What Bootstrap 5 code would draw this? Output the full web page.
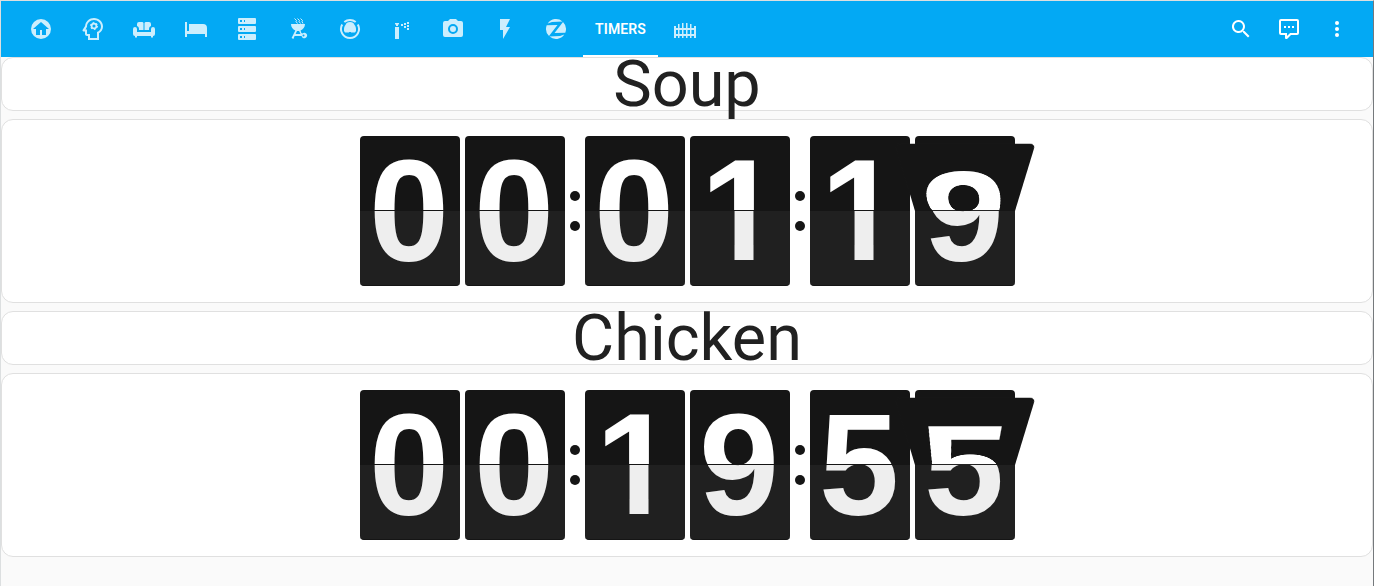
<!DOCTYPE html>
<html lang="en">
<head>
<meta charset="utf-8">
<meta name="viewport" content="width=device-width, initial-scale=1">
<title>Timers</title>
<link href="https://cdn.jsdelivr.net/npm/bootstrap@5.3.0/dist/css/bootstrap.min.css" rel="stylesheet">
<style>
body{font-family:Roboto,sans-serif;background:#fafafa;color:#212121;height:586px;overflow:hidden;border:solid #dcdfe0;border-width:1px 1px 0;border-right-color:#75797c}
.appbar{height:56px;background:#03a9f4;color:#fff;padding-left:14.2px;padding-right:12px}
.appbar svg{width:24px;height:24px;fill:currentColor;display:block}
.view-tab{width:51.54px;color:rgba(255,255,255,.8)}
.view-tab.current{width:75px;margin:0 1px;color:#fff;font-size:14px;font-weight:600;letter-spacing:.1px;border-bottom:2px solid #fff;padding-top:2px}
.tool{width:48px;height:48px;color:#fff}
.panel{background:#fff;border:1px solid #e0e0e0;border-radius:12px}
.heading{height:54px;font-size:64.8px;line-height:53px;font-weight:400}
.clock-panel{height:184px}
.clock{gap:5px}
.flip{width:100px;height:150px;position:relative;perspective:200px;font:bold 144px/150px "Liberation Sans",sans-serif;text-align:center}
.half{position:absolute;left:0;width:100px;height:75px;overflow:hidden}
.half span{display:block;width:99px;height:150px;line-height:151px}
.upper{top:0;background:#151515;color:#fff;border-radius:4px 4px 0 0}
.upper::after{content:"";position:absolute;left:0;right:0;bottom:0;height:1px;background:#151515}
.lower{top:75px;background:#202020;color:#eee;border-radius:0 0 4px 4px;border-bottom:1px solid #151515}
.lower span{margin-top:-75px}
.half .one{width:102px;line-height:149px}
.lower .one{clip-path:inset(0 38px 26px 45px)}
.leaf{transform-origin:50% 100%;transform:rotateX(-50.3deg)}
.colon{width:10px;gap:20px}
.colon i{width:10px;height:10px;border-radius:50%;background:#151515}
</style>
</head>
<body>
<header class="appbar d-flex align-items-stretch">
  <nav class="d-flex" id="tabs">
    <a class="view-tab d-flex align-items-center justify-content-center"><svg viewBox="0 0 24 24"><path fill-rule="evenodd" d="M12 2a10 10 0 1 1 0 20 10 10 0 0 1 0-20ZM12 5l-8 7h3v6h4v-5h2v5h4v-6h3Z"/></svg></a>
    <a class="view-tab d-flex align-items-center justify-content-center"><svg viewBox="-1 0 24 24"><path d="M13 1C8.400 1 4.600 4.500 4.100 9L1.700 12.800C1.200 13.500 1.700 14.400 2.500 14.400H4V17C4 18.100 4.900 19 6 19H7V23H18V16.300C20.400 14.900 22 12.200 22 9.500C22 4.800 18 1 13 1ZM16 15V21H9V17H6V12.500H4.500L6 9.700C6 6 9 3 13 3C17 3 20 6 20 9.700C20 12.100 18.400 14 16 15Z" fill-rule="evenodd"/><circle cx="13" cy="9" r="2.400" fill="none" stroke="currentColor" stroke-width="1.700"/><circle cx="13" cy="9" r="3.600" fill="none" stroke="currentColor" stroke-width="1" stroke-dasharray="1.800 1.970"/></svg></a>
    <a class="view-tab d-flex align-items-center justify-content-center"><svg viewBox="0 0 24 24"><path d="M7 5a2 2 0 0 0-2 2v2c1.200.4 2 1.600 2 3v1h4.500V6A1.500 1.500 0 0 0 10 5ZM14 5a1.500 1.500 0 0 0-1.500 1v7H17v-1c0-1.400.8-2.600 2-3V7a2 2 0 0 0-2-2ZM3 10a2 2 0 0 0-2 2v5a2 2 0 0 0 2 2v1.500h2V19h14v1.500h2V19a2 2 0 0 0 2-2v-5a2 2 0 0 0-4 0v3H5v-3a2 2 0 0 0-2-2Z"/></svg></a>
    <a class="view-tab d-flex align-items-center justify-content-center"><svg viewBox="0 0 24 24"><path d="M1 5h2v9h2V7h14a4 4 0 0 1 4 4v9h-2v-3H3v3H1Z"/></svg></a>
    <a class="view-tab d-flex align-items-center justify-content-center"><svg viewBox="0 0 24 24"><path fill-rule="evenodd" d="M4 1h16a1 1 0 0 1 1 1v4a1 1 0 0 1-1 1H4a1 1 0 0 1-1-1V2a1 1 0 0 1 1-1Zm0 8h16a1 1 0 0 1 1 1v4a1 1 0 0 1-1 1H4a1 1 0 0 1-1-1v-4a1 1 0 0 1 1-1Zm0 8h16a1 1 0 0 1 1 1v4a1 1 0 0 1-1 1H4a1 1 0 0 1-1-1v-4a1 1 0 0 1 1-1ZM5 3v2h2V3Zm4 0v2h1V3ZM5 11v2h2v-2Zm4 0v2h1v-2ZM5 19v2h2v-2Zm4 0v2h1v-2Z"/></svg></a>
    <a class="view-tab d-flex align-items-center justify-content-center"><svg viewBox="0 0 24 24"><path d="M5 7h14c0 3-1.900 5.500-4.500 6.500l.9 2.500 1 .5a2.800 2.800 0 1 1-.8 2.500H8.600l-1.200 3-1.800-1 3.700-7.500C6.900 12.500 5 10 5 7Zm6 7-1.400 3h4.900l-1.400-3Zm6.500 3.500a1 1 0 1 0 0 2 1 1 0 0 0 0-2Z" fill-rule="evenodd" transform="translate(-1)"/><path d="m7.500 1.500 2 2-.5 1 1.500 2M10.500 1.500l2 2-.5 1 1.500 2M13.500 1.500l2 2-.5 1 1 2" fill="none" stroke="currentColor" stroke-width="1"/></svg></a>
    <a class="view-tab d-flex align-items-center justify-content-center"><svg viewBox="0 0 24 24"><path d="M4.200 7.500A9 9 0 1 0 19.800 7.500M6.300 5A9 9 0 0 1 17.700 5" fill="none" stroke="currentColor" stroke-width="2"/><path d="M12 5C9.500 5 8 6.200 7.500 8C6.500 9 6 10.500 6 12.500V14l1 1.500h4V15h2v.5h4l1-1.500v-1.500c0-2-.5-3.500-1.500-4.500C16 6.200 14.500 5 12 5Z"/></svg></a>
    <a class="view-tab d-flex align-items-center justify-content-center"><svg viewBox="0 0 24 24"><path d="M5 6h4v1L8 8v1H6V8L5 7Zm0 4h4v12H5ZM11 7h2v2h-2Zm3-1h2v2h-2Zm0 3h2v2h-2Zm3-4h2v2h-2Zm0 3h2v2h-2Zm0 3h2v2h-2Z"/></svg></a>
    <a class="view-tab d-flex align-items-center justify-content-center"><svg viewBox="0 0 24 24"><path fill-rule="evenodd" d="M4 4h3l2-2h6l2 2h3a2 2 0 0 1 2 2v12a2 2 0 0 1-2 2H4a2 2 0 0 1-2-2V6a2 2 0 0 1 2-2Zm8 3a5 5 0 1 0 0 10 5 5 0 0 0 0-10Zm0 2a3 3 0 1 1 0 6 3 3 0 0 1 0-6Z"/></svg></a>
    <a class="view-tab d-flex align-items-center justify-content-center"><svg viewBox="0 0 24 24"><path d="M7 2v11h3v9l7-12h-4l4-8Z"/></svg></a>
    <a class="view-tab d-flex align-items-center justify-content-center"><svg viewBox="0 0 24 24"><path d="M3.700 6.400A10 10 0 0 1 18.500 4.400L8 5ZM2.700 8.300L13.500 8L5 18.900A10 10 0 0 1 2.700 8.300ZM20.300 17.600A10 10 0 0 1 5.500 19.600L16 19ZM21.300 15.700L10.500 16L19 5.100A10 10 0 0 1 21.300 15.700Z"/></svg></a>
    <a class="view-tab current d-flex align-items-center justify-content-center text-decoration-none">TIMERS</a>
    <a class="view-tab d-flex align-items-center justify-content-center"><svg viewBox="0 0 24 24"><path d="M1 9h2v2h2V7h1.500v4H9V6h1.500v5H13V6h1.500v5H17V7h1.500v4H21V9h2v12h-2v-2h-2.500v2H17v-2h-2.500v2H13v-2h-2.500v2H9v-2H6.500v2H5v-2H3v2H1Zm2 4v4h2v-4Zm3.500 0v4H9v-4Zm4 0v4H13v-4Zm4 0v4H17v-4Zm4 0v4H21v-4Z" fill-rule="evenodd"/></svg></a>
  </nav>
  <div class="d-flex ms-auto align-items-center">
    <span class="tool d-flex align-items-center justify-content-center"><svg viewBox="0 0 24 24"><path fill-rule="evenodd" d="M9.500 3a6.500 6.500 0 0 1 4.900 10.700l.3.300h.8l5 5-1.500 1.500-5-5v-.8l-.3-.3A6.500 6.500 0 1 1 9.500 3Zm0 2a4.500 4.500 0 1 0 0 9 4.500 4.500 0 0 0 0-9Z"/></svg></span>
    <span class="tool d-flex align-items-center justify-content-center"><svg viewBox="0 0 24 24"><path fill-rule="evenodd" d="M4 2h16a2 2 0 0 1 2 2v12a2 2 0 0 1-2 2h-6l-3.700 3.700a1 1 0 0 1-.8.300H9a1 1 0 0 1-1-1v-3H4a2 2 0 0 1-2-2V4a2 2 0 0 1 2-2Zm0 2v12h6v3.100L13.100 16H20V4ZM7 9h2v2H7Zm4 0h2v2h-2Zm4 0h2v2h-2Z"/></svg></span>
    <span class="tool d-flex align-items-center justify-content-center"><svg viewBox="0 0 24 24"><circle cx="12" cy="6" r="2"/><circle cx="12" cy="12" r="2"/><circle cx="12" cy="18" r="2"/></svg></span>
  </div>
</header>
<main class="d-flex flex-column gap-2">
  <h1 class="panel heading text-center m-0">Soup</h1>
  <section class="panel clock-panel d-flex align-items-center justify-content-center"><div class="clock d-flex align-items-center" data-time="00:01:19"></div></section>
  <h1 class="panel heading text-center m-0">Chicken</h1>
  <section class="panel clock-panel d-flex align-items-center justify-content-center"><div class="clock d-flex align-items-center" data-time="00:19:55"></div></section>
</main>
<script src="https://cdn.jsdelivr.net/npm/bootstrap@5.3.0/dist/js/bootstrap.bundle.min.js"></script>
<script>
// Build each clock from its time; the last digit is caught mid-flip.
document.querySelectorAll('.clock').forEach(function (clock) {
  var chars = clock.dataset.time.split('');
  clock.innerHTML = chars.map(function (c, i) {
    if (c === ':') return '<div class="colon d-flex flex-column"><i></i><i></i></div>';
    var d = '<span' + (c === '1' ? ' class="one"' : '') + '>' + c + '</span>', last = i === chars.length - 1;
    return '<div class="flip">' +
      (last ? '<div class="half upper"></div><div class="half lower">' + d + '</div><div class="half upper leaf">' + d + '</div>'
            : '<div class="half upper">' + d + '</div><div class="half lower">' + d + '</div>') + '</div>';
  }).join('');
});
</script>
</body>
</html>
